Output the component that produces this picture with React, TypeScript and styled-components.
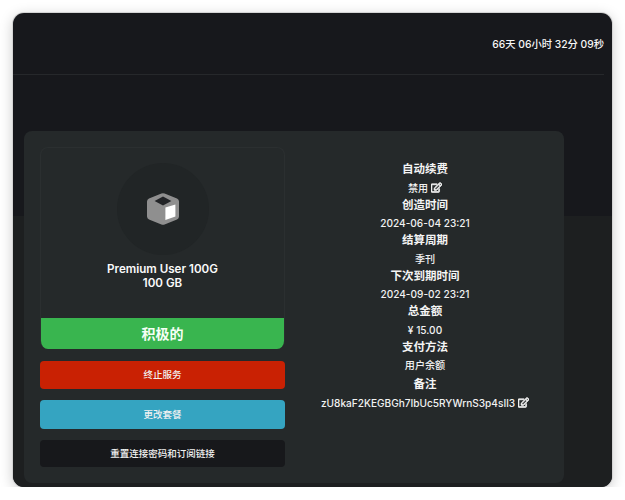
import styled, { createGlobalStyle } from "styled-components";
import { FaRegEdit } from "react-icons/fa";

const details = [
  { label: "自动续费", value: "禁用", editable: true },
  { label: "创造时间", value: "2024-06-04 23:21" },
  { label: "结算周期", value: "季刊" },
  { label: "下次到期时间", value: "2024-09-02 23:21" },
  { label: "总金额", value: "¥ 15.00" },
  { label: "支付方法", value: "用户余额" },
];

function CubeIcon() {
  return (
    <svg width="32" height="32" viewBox="0 0 32 32">
      <path
        d="M14.4 0.6 Q16 0 17.6 0.6 L30 5.6 Q32 6.4 32 8.6 L32 23.4 Q32 25.6 30 26.4 L17.6 31.4 Q16 32 14.4 31.4 L2 26.4 Q0 25.6 0 23.4 L0 8.6 Q0 6.4 2 5.6 Z"
        fill="#8f8f8f"
      />
      <path d="M16 3.4 L24.4 8 L16 12.6 L7.6 8 Z" fill="#222427" />
      <path d="M18.4 14.6 L28.4 11.4 L28.4 23.4 L18.4 27 Z" fill="#ffffff" />
    </svg>
  );
}

export default function App() {
  return (
    <>
      <GlobalStyle />
      <Window>
        <Header>
          <Countdown>66天 06小时 32分 09秒</Countdown>
        </Header>
        <Main>
          <Card>
            <LeftColumn>
              <ServiceCard>
                <ServiceBody>
                  <IconCircle>
                    <CubeIcon />
                  </IconCircle>
                  <ServiceName>
                    Premium User 100G
                    <br />
                    100 GB
                  </ServiceName>
                </ServiceBody>
                <StatusBar>积极的</StatusBar>
              </ServiceCard>
              <ActionButton $bg="#c92103" $height={28}>终止服务</ActionButton>
              <ActionButton $bg="#35a4c1" $height={29}>更改套餐</ActionButton>
              <ActionButton $bg="#17181b" $height={27}>重置连接密码和订阅链接</ActionButton>
            </LeftColumn>
            <RightColumn>
              {details.map((item) => (
                <div key={item.label}>
                  <Label>{item.label}</Label>
                  <Value>
                    {item.value}
                    {item.editable && <EditIcon />}
                  </Value>
                </div>
              ))}
              <NoteBlock>
                <Label>备注</Label>
                <Value>
                  zU8kaF2KEGBGh7IbUc5RYWrnS3p4sIl3
                  <EditIcon />
                </Value>
              </NoteBlock>
            </RightColumn>
          </Card>
        </Main>
      </Window>
    </>
  );
}

const GlobalStyle = createGlobalStyle`
  html, body {
    margin: 0;
    background: #ffffff;
  }
  body {
    font-family: Inter, "Noto Sans CJK SC", sans-serif;
    color: #ffffff;
  }
`;

const Window = styled.div`
  box-sizing: border-box;
  width: 599px;
  height: 474px;
  margin: 13px 0 0 13px;
  border-radius: 11px;
  overflow: hidden;
  background: #17181c;
  box-shadow: 0 0 0 1px #d4d4d4, 0 3px 14px rgba(0, 0, 0, 0.22);
`;

const Header = styled.div`
  box-sizing: border-box;
  height: 62px;
  margin-right: 8px;
  padding-top: 24px;
  display: flex;
  justify-content: flex-end;
  align-items: flex-start;
  border-bottom: 1px solid #26282b;
`;

const Countdown = styled.span`
  font-size: 10.3px;
  line-height: 14px;
  font-weight: 500;
  color: #f6f6f6;
`;

const Main = styled.div`
  box-sizing: border-box;
  height: 412px;
  padding: 56px 48px 4px 11px;
  background: linear-gradient(#17181c 0 141px, #1d1f20 141px);
`;

const Card = styled.div`
  box-sizing: border-box;
  height: 100%;
  padding: 16px 16px 0;
  display: flex;
  gap: 16px;
  border-radius: 8px;
  background: #25292a;
`;

const LeftColumn = styled.div`
  width: 245px;
  flex-shrink: 0;
  display: flex;
  flex-direction: column;
  gap: 11px;
`;

const ServiceCard = styled.div`
  box-sizing: border-box;
  height: 202px;
  display: flex;
  flex-direction: column;
  border: 1px solid #2b2f30;
  border-bottom: 0;
  border-radius: 8px;
  overflow: hidden;
  margin-bottom: 1px;
`;

const ServiceBody = styled.div`
  flex: 1;
  display: flex;
  flex-direction: column;
  align-items: center;
  padding-top: 15px;
`;

const IconCircle = styled.div`
  width: 92px;
  height: 92px;
  border-radius: 50%;
  background: #212526;
  display: flex;
  align-items: center;
  justify-content: center;
`;

const ServiceName = styled.div`
  margin-top: 7px;
  font-size: 11.6px;
  line-height: 14px;
  font-weight: 600;
  text-align: center;
  color: #fafafa;
`;

const StatusBar = styled.div`
  height: 31px;
  background: #39b54f;
  font-size: 14px;
  font-weight: 700;
  line-height: 31px;
  text-align: center;
  color: #f5fff6;
`;

const ActionButton = styled.div<{ $bg: string; $height: number }>`
  height: ${(p) => p.$height}px;
  line-height: ${(p) => p.$height}px;
  border-radius: 4px;
  background: ${(p) => p.$bg};
  font-size: 9.5px;
  font-weight: 500;
  text-align: center;
  color: #f1f1f1;
`;

const RightColumn = styled.div`
  flex: 1;
  padding: 14px 0 0 1px;
  text-align: center;
`;

const Label = styled.div`
  font-size: 11.5px;
  line-height: 17.5px;
  font-weight: 700;
  color: #f4f4f4;
`;

const Value = styled.div`
  font-size: 10.1px;
  line-height: 18px;
  font-weight: 500;
  color: #f2f2f2;
`;

const NoteBlock = styled.div`
  margin-top: 2px;
`;

const EditIcon = styled(FaRegEdit)`
  width: 11px;
  height: 11px;
  margin-left: 3px;
  vertical-align: -1px;
  color: #f8f8f8;
  stroke: currentColor;
  stroke-width: 36px;
`;
